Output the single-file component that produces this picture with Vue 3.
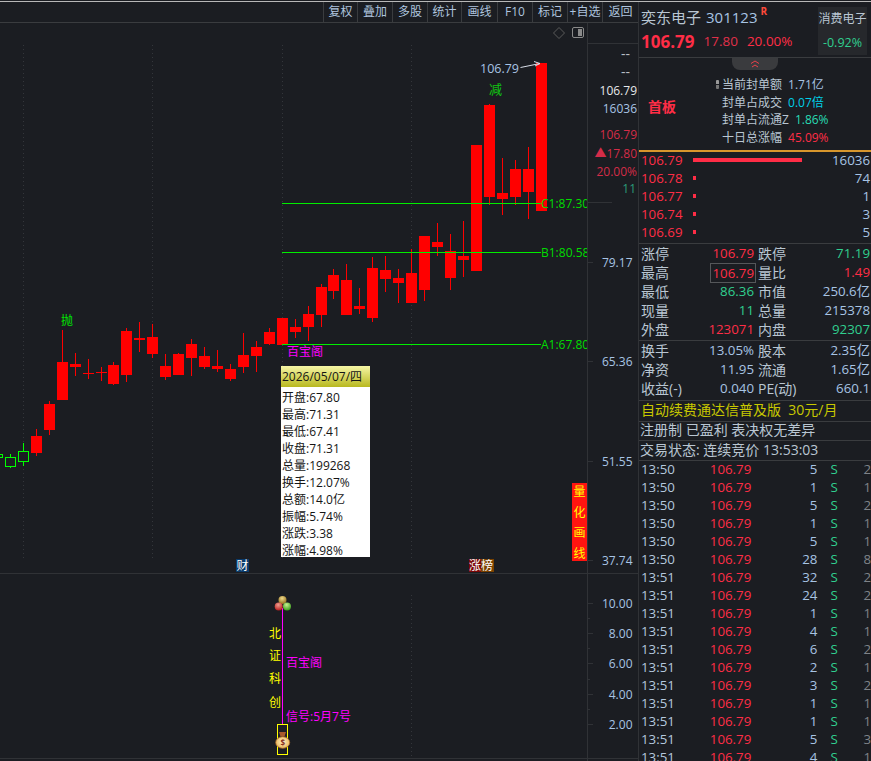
<script setup>
const tools = ['复权', '叠加', '多股', '统计', '画线', 'F10', '标记', '+自选', '返回']
const toolWidths = [34, 35, 35, 34, 36, 35, 35, 35, 36]

const red = [
  [36.5, 436, 453, 429, 456], [49.5, 404, 430, 401, 435], [62.5, 362, 400, 330, 400],
  [75.5, 364, 367, 353, 376], [88.5, 373, 374, 359, 379], [101.5, 372, 373, 367, 381],
  [113.5, 365, 384, 362, 385], [126.5, 331, 375, 328, 382], [139.5, 338, 340, 322, 352],
  [152.5, 337, 354, 324, 358], [165.5, 366, 377, 354, 380], [178.5, 354, 375, 353, 375],
  [191.5, 344, 358, 339, 376], [204.5, 356, 367, 347, 369], [217.5, 366, 369, 350, 372],
  [230.5, 369, 379, 364, 381], [243.5, 355, 367, 333, 373], [256.5, 347, 356, 341, 372],
  [269.5, 332, 344, 328, 345], [282.5, 318, 345, 318, 345], [295.5, 327, 332, 319, 338],
  [308.5, 314, 327, 306, 341], [321.5, 287, 315, 284, 327], [333.5, 275, 291, 269, 299],
  [346.5, 280, 315, 264, 315], [359.5, 306, 309, 288, 314], [372.5, 268, 318, 257, 322],
  [385.5, 270, 279, 256, 292], [398.5, 278, 283, 269, 303], [411.5, 273, 303, 249, 303],
  [424.5, 236, 290, 236, 301], [437.5, 242, 247, 223, 256], [450.5, 251, 278, 234, 290],
  [463.5, 256, 260, 221, 277], [476.5, 145, 271, 145, 271], [489.5, 105, 197, 104, 205],
  [502.5, 193, 199, 158, 215], [515.5, 169, 197, 160, 205], [528.5, 169, 192, 147, 219],
  [541.5, 63, 211, 63, 211]
]
const green = [
  [-2.5, 454, 457, 454, 457], [10.5, 457, 466, 454, 468], [23.5, 451, 461, 443, 466]
]
const dotted = [23.5, 152.5, 282.5, 411.5]
const levels = [
  { y: 203, t: 'C1:87.30' }, { y: 252, t: 'B1:80.58' }, { y: 344, t: 'A1:67.80' }
]
const axisMain = [
  { y: 262, t: '79.17' }, { y: 361, t: '65.36' }, { y: 461, t: '51.55' }, { y: 560, t: '37.74' }
]
const axisSub = [
  { y: 603, t: '10.00' }, { y: 633, t: '8.00' }, { y: 663, t: '6.00' }, { y: 694, t: '4.00' }, { y: 724, t: '2.00' }
]
const minorSub = [618, 648, 679, 709]
const vertical = [{ y: 633, t: '北' }, { y: 655, t: '证' }, { y: 678, t: '科' }, { y: 702, t: '创' }]
const quant = [{ y: 491, t: '量' }, { y: 512, t: '化' }, { y: 532, t: '画' }, { y: 553, t: '线' }]

const tip = ['开盘:67.80', '最高:71.31', '最低:67.41', '收盘:71.31', '总量:199268', '换手:12.07%', '总额:14.0亿', '振幅:5.74%', '涨跌:3.38', '涨幅:4.98%']

const info = [
  { l: '当前封单额', v: '1.71亿', c: 'v-blue', pin: true },
  { l: '封单占成交', v: '0.07倍', c: 'v-cyan' },
  { l: '封单占流通Z', v: '1.86%', c: 'v-teal' },
  { l: '十日总涨幅', v: '45.09%', c: 'v-red' }
]
const orders = [
  { p: '106.79', w: 109, q: '16036' }, { p: '106.78', w: 3, q: '74' }, { p: '106.77', w: 3, q: '1' },
  { p: '106.74', w: 3, q: '3' }, { p: '106.69', w: 3, q: '5' }
]
const stats1 = [
  ['涨停', '106.79', 'v-red', '跌停', '71.19', 'v-green'],
  ['最高', '106.79', 'v-red boxed', '量比', '1.49', 'v-red'],
  ['最低', '86.36', 'v-green', '市值', '250.6亿', 'v-blue'],
  ['现量', '11', 'v-green', '总量', '215378', 'v-blue'],
  ['外盘', '123071', 'v-red', '内盘', '92307', 'v-green']
]
const stats2 = [
  ['换手', '13.05%', 'v-blue', '股本', '2.35亿', 'v-blue'],
  ['净资', '11.95', 'v-blue', '流通', '1.65亿', 'v-blue'],
  ['收益(-)', '0.040', 'v-blue', 'PE(动)', '660.1', 'v-blue']
]
const trades = [
  ['13:50', 5, 2], ['13:50', 1, 1], ['13:50', 5, 2], ['13:50', 1, 1], ['13:50', 5, 1], ['13:50', 28, 8],
  ['13:51', 32, 2], ['13:51', 24, 2], ['13:51', 1, 1], ['13:51', 4, 1], ['13:51', 6, 2], ['13:51', 2, 1],
  ['13:51', 3, 2], ['13:51', 1, 1], ['13:51', 1, 1], ['13:51', 5, 3], ['13:51', 4, 1]
]
</script>

<template>
  <div class="app">
    <div class="topline"></div>
    <div class="main">
      <section class="left">
        <div class="toolbar">
          <span v-for="(t, i) in tools" :key="t" class="tool" :style="{ width: toolWidths[i] + 'px' }">{{ t }}</span>
        </div>
        <div class="pane">
          <svg class="chart" width="638" height="738" viewBox="0 23 638 738">
            <defs>
              <clipPath id="plotclip"><rect x="0" y="23" width="587" height="738" /></clipPath>
              <radialGradient id="ballGold" cx="45%" cy="30%" r="70%"><stop offset="0" stop-color="#efd98a" /><stop offset="1" stop-color="#94701c" /></radialGradient>
              <radialGradient id="ballRed" cx="45%" cy="30%" r="70%"><stop offset="0" stop-color="#f0a090" /><stop offset="1" stop-color="#b81c1c" /></radialGradient>
              <radialGradient id="ballGreen" cx="45%" cy="30%" r="70%"><stop offset="0" stop-color="#c8f090" /><stop offset="1" stop-color="#389a1c" /></radialGradient>
              <radialGradient id="bagFill" cx="50%" cy="45%" r="60%"><stop offset="0" stop-color="#fff4c8" /><stop offset="1" stop-color="#e8b050" /></radialGradient>
            </defs>

            <line v-for="x in dotted" :key="x" :x1="x" :x2="x" y1="45" y2="558" class="dot" />
            <line x1="411.5" x2="411.5" y1="595" y2="756" class="dot" />

            <line x1="0" x2="638" y1="573.5" y2="573.5" class="rule" />
            <line x1="0" x2="638" y1="758.5" y2="758.5" class="rule" />
            <line x1="587.5" x2="587.5" y1="23" y2="761" class="rule" />
            <line x1="587" x2="638" y1="43.5" y2="43.5" class="rule" />
            <line x1="587" x2="612" y1="202.5" y2="202.5" class="rule" />
            <line v-for="a in axisMain" :key="a.t" x1="587" x2="593" :y1="a.y + 0.5" :y2="a.y + 0.5" class="rule" />
            <line v-for="a in axisSub" :key="a.t" x1="587" x2="593" :y1="a.y + 0.5" :y2="a.y + 0.5" class="rule" />
            <line v-for="m in minorSub" :key="m" x1="587" x2="590" :y1="m + 0.5" :y2="m + 0.5" class="rule" />

            <path d="M559 27.5 L564.5 33 L559 38.5 L553.5 33 Z" class="diamond" />
            <rect x="572.5" y="27.5" width="11" height="10" rx="1.5" class="panel-ic" />
            <rect x="578" y="29" width="4" height="7" fill="#8a8a8a" />

            <g v-for="c in green" :key="c[0]">
              <rect :x="c[0] - 0.5" :y="c[3]" width="1" :height="c[4] - c[3]" fill="#00ff00" />
              <rect :x="c[0] - 5" :y="c[1] + 0.5" width="10" :height="c[2] - c[1]" class="hollow" />
            </g>
            <g v-for="c in red" :key="c[0]">
              <rect :x="c[0] - 0.5" :y="c[3]" width="1" :height="c[4] - c[3]" fill="#ff0000" />
              <rect :x="c[0] - 5.5" :y="c[1]" width="11" :height="c[2] - c[1]" fill="#ff0000" />
            </g>

            <g v-for="l in levels" :key="l.t">
              <line x1="282" x2="541" :y1="l.y + 0.5" :y2="l.y + 0.5" class="level" />
              <text x="541" :y="l.y + 0.5" class="lv" clip-path="url(#plotclip)">{{ l.t }}</text>
            </g>

            <text x="480" y="68" class="tx blue">106.79</text>
            <path d="M520.5 67.5 L540 63.5 M534 61.5 L540 63.5 L535 66" class="arrow" />
            <text x="489" y="89" class="tx mark">减</text>
            <text x="61" y="320" class="tx mark2">抛</text>
            <text x="287" y="351" class="tx magenta">百宝阁</text>

            <rect x="236" y="559" width="13" height="13" fill="#0a3a6a" />
            <text x="236.5" y="565.5" class="tx white">财</text>
            <rect x="469" y="559" width="12" height="13" fill="#7a0808" />
            <rect x="481" y="559" width="13" height="13" fill="#7a4200" />
            <text x="469" y="565.5" class="tx white">涨榜</text>

            <rect x="572" y="483" width="15" height="78" fill="#ff1410" />
            <text v-for="q in quant" :key="q.t" x="573.5" :y="q.y" class="tx yellow">{{ q.t }}</text>

            <text x="630" y="53" class="ax grey dash">--</text>
            <text x="630" y="71" class="ax grey dash">--</text>
            <text x="637" y="90" class="ax bright">106.79</text>
            <text x="637" y="108" class="ax blue">16036</text>
            <text x="637" y="134" class="ax dimred">106.79</text>
            <text x="637" y="153" class="ax dimred">▲17.80</text>
            <text x="637" y="171" class="ax dimred">20.00%</text>
            <text x="636" y="188" class="ax dimgreen">11</text>
            <text v-for="a in axisMain" :key="a.t" x="632.5" :y="a.y" class="ax blue">{{ a.t }}</text>
            <text v-for="a in axisSub" :key="a.t" x="632.5" :y="a.y" class="ax blue">{{ a.t }}</text>

            <line x1="282.5" x2="282.5" y1="608" y2="724" class="stem" />
            <circle cx="282.5" cy="600" r="4" fill="url(#ballGold)" />
            <circle cx="278.7" cy="606.5" r="4" fill="url(#ballRed)" />
            <circle cx="287" cy="606.5" r="4" fill="url(#ballGreen)" />
            <text v-for="v in vertical" :key="v.t" x="269" :y="v.y" class="tx yellow">{{ v.t }}</text>
            <text x="286" y="662" class="tx magenta">百宝阁</text>
            <text x="286" y="716" class="tx magenta">信号:5月7号</text>
            <rect x="277.5" y="724.5" width="10" height="30" class="ybox" />
            <path d="M279 732 L286 732 L284.5 736.5 L280.5 736.5 Z" fill="#a85a2c" />
            <ellipse cx="282.7" cy="742.5" rx="7" ry="5.8" fill="url(#bagFill)" stroke="#b06a28" stroke-width="0.8" />
            <text x="282.7" y="742.8" class="dollar">$</text>
          </svg>

          <div class="tooltip">
            <div class="tip-head">2026/05/07/四</div>
            <div class="tip-body">
              <div v-for="t in tip" :key="t" class="tip-row">{{ t }}</div>
            </div>
          </div>
        </div>
      </section>

      <aside class="right">
        <header class="head">
          <div class="head-main">
            <div class="name"><span class="cn">奕东电子</span><span class="code">301123</span><sup class="flag">R</sup></div>
            <div class="quote">
              <b class="last">106.79</b><span class="chg">17.80</span><span class="pct">20.00%</span>
            </div>
          </div>
          <div class="sector">
            <span class="sector-name">消费电子</span>
            <span class="sector-val">-0.92%</span>
          </div>
        </header>

        <div class="info">
          <div class="handle">
            <svg width="12" height="8" viewBox="0 0 12 8"><path d="M2 3.5 L6 1 L10 3.5 M3 7 L6 5 L9 7" fill="none" stroke="#e8404a" stroke-width="1" /></svg>
          </div>
          <div class="board">首板</div>
          <div class="info-rows">
            <div v-for="r in info" :key="r.l" class="info-row">
              <i v-if="r.pin" class="pin"></i>
              <span class="info-label">{{ r.l }}</span><span :class="r.c">{{ r.v }}</span>
            </div>
          </div>
        </div>

        <div class="orders">
          <div v-for="o in orders" :key="o.p" class="order">
            <span class="v-red order-price">{{ o.p }}</span>
            <span class="order-track"><i class="order-bar" :style="{ width: o.w + 'px' }"></i></span>
            <span class="v-blue">{{ o.q }}</span>
          </div>
        </div>

        <div class="stats s1">
          <div v-for="r in stats1" :key="r[0]" class="stat">
            <span class="cell c1"><em>{{ r[0] }}</em><span :class="r[2]">{{ r[1] }}</span></span>
            <span class="cell c2"><em>{{ r[3] }}</em><span :class="r[5]">{{ r[4] }}</span></span>
          </div>
        </div>
        <div class="stats s2">
          <div v-for="r in stats2" :key="r[0]" class="stat">
            <span class="cell c1"><em>{{ r[0] }}</em><span :class="r[2]">{{ r[1] }}</span></span>
            <span class="cell c2"><em>{{ r[3] }}</em><span :class="r[5]">{{ r[4] }}</span></span>
          </div>
        </div>

        <div class="line promo">自动续费通达信普及版&nbsp; 30元/月</div>
        <div class="line note">注册制 已盈利 表决权无差异</div>
        <div class="line state">交易状态: 连续竞价 13:53:03</div>

        <div class="trades">
          <div v-for="(t, i) in trades" :key="i" class="trade">
            <span class="t-time">{{ t[0] }}</span>
            <span class="t-price v-red">106.79</span>
            <span class="t-vol">{{ t[1] }}</span>
            <span class="t-side">S</span>
            <span class="t-n">{{ t[2] }}</span>
          </div>
        </div>
      </aside>
    </div>
  </div>
</template>

<style>
html, body { margin: 0; background: #1b1d22; }
</style>

<style scoped>
.app {
  width: 871px;
  height: 761px;
  overflow: hidden;
  background: #1b1d22;
  display: flex;
  flex-direction: column;
  font-family: "Open Sans", "Noto Sans CJK SC", sans-serif;
  color: #b4c8de;
}
.topline { height: 1px; margin-top: 1px; background: #b8b8b8; flex: none; margin-bottom: 0; }
.main { flex: 1; display: flex; min-height: 0; }
.left { width: 638px; flex: none; display: flex; flex-direction: column; }
.toolbar {
  height: 20px;
  flex: none;
  border-bottom: 1px solid #3a3c3f;
  display: flex;
  justify-content: flex-end;
}
.tool {
  box-sizing: border-box;
  border-left: 1px solid #3a3c3f;
  font-size: 12px;
  line-height: 20px;
  text-align: center;
  white-space: nowrap;
  color: #aec4de;
}
.pane { position: relative; flex: 1; }
.chart { display: block; }
.dot { stroke: #34363b; stroke-width: 1; stroke-dasharray: 1 3; }
.rule { stroke: #303236; stroke-width: 1; }
.diamond { fill: none; stroke: #5a5a5a; }
.panel-ic { fill: none; stroke: #8a8a8a; }
.hollow { fill: #1b1d22; stroke: #00ff00; stroke-width: 1; }
.level { stroke: #00ee00; stroke-width: 1; }
.lv { font-size: 12px; fill: #00dc00; dominant-baseline: central; }
.tx { font-size: 12px; dominant-baseline: central; }
.blue { fill: #a8c4e4; }
.tx.blue { font-size: 12.5px; }
.arrow { fill: none; stroke: #d8dde8; stroke-width: 1; }
.mark { fill: #10c810; font-size: 13px; }
.mark2 { fill: #00e800; }
.magenta { fill: #ff00ff; }
.white { fill: #ffffff; }
.yellow { fill: #ffff00; }
.ax { font-size: 12px; text-anchor: end; dominant-baseline: central; }
.dash { font-size: 14px; }
.grey { fill: #b8bec6; }
.bright { fill: #e6e8ea; }
.dimred { fill: #d42c48; }
.dimgreen { fill: #2a9a78; }
.stem { stroke: #ff00ff; stroke-width: 1; }
.ybox { fill: none; stroke: #ffff00; stroke-width: 1; }
.dollar { font-size: 8px; font-weight: 700; fill: #8a3020; text-anchor: middle; dominant-baseline: central; }

.tooltip {
  position: absolute;
  left: 281px;
  top: 343px;
  width: 89px;
  height: 191px;
  background: #fff;
  color: #151515;
  font-size: 12px;
}
.tip-head {
  height: 21px;
  line-height: 21px;
  padding-left: 1px;
  background: linear-gradient(#f6f6a6, #b8b81e);
  white-space: nowrap;
}
.tip-body { padding-top: 2px; }
.tip-row { height: 17px; line-height: 17px; padding-left: 1px; white-space: nowrap; }
.tip-row:last-child { height: 15px; }

.right {
  width: 233px;
  box-sizing: border-box;
  flex: none;
  border-left: 1px solid #303236;
  overflow: hidden;
  font-size: 13.3px;
}
.head {
  height: 55px;
  box-sizing: content-box;
  border-bottom: 1px solid #3a3c3f;
  display: flex;
  position: relative;
}
.head-main { width: 179px; box-sizing: border-box; padding-left: 2px; flex: none; }
.name { height: 30px; line-height: 30px; white-space: nowrap; display: flex; }
.cn { font-size: 15px; color: #b9c6d2; }
.code { font-size: 15px; margin-left: 5px; color: #a8c4e4; }
.flag { font-size: 10px; font-weight: 700; color: #ff4a3a; line-height: 14px; margin: 2px 0 0 3px; }
.quote { display: flex; align-items: center; height: 20px; margin-top: -1px; white-space: nowrap; }
.last { font-size: 17px; color: #ff2d46; }
.chg { font-size: 13.5px; color: #e0304a; margin-left: 9px; }
.pct { font-size: 13.5px; color: #ff2d46; margin-left: 9px; }
.sector {
  width: 49px;
  height: 48px;
  margin-top: 5px;
  background: #26282c;
  display: flex;
  flex-direction: column;
  align-items: center;
  white-space: nowrap;
}
.sector-name { font-size: 12px; line-height: 24px; color: #b9c6d2; }
.sector-val { font-size: 12.5px; line-height: 24px; color: #30cf8f; }

.info {
  position: relative;
  height: 92px;
  border-bottom: 2px solid #d8962c;
  box-sizing: content-box;
  display: flex;
}
.handle {
  position: absolute;
  left: 93px;
  top: 0;
  width: 46px;
  height: 12px;
  background: #3a3b3e;
  border-radius: 0 0 8px 8px;
  display: flex;
  justify-content: center;
  align-items: center;
}
.board {
  width: 83px;
  padding-left: 9px;
  box-sizing: border-box;
  margin-top: 40px;
  font-size: 14px;
  font-weight: 700;
  line-height: 18px;
  color: #ff2d46;
}
.info-rows { padding-top: 18px; }
.info-row { height: 17.7px; line-height: 18px; font-size: 12px; display: flex; white-space: nowrap; position: relative; }
.info-label { color: #b9c6d2; margin-right: 6px; }
.pin {
  position: absolute;
  left: -6px;
  top: 4px;
  width: 3px;
  height: 9px;
  background: linear-gradient(#999 0 4px, transparent 4px 5px, #777 5px);
  border-radius: 1px;
}
.v-red { color: #ff2d46; }
.v-green { color: #30cf8f; }
.v-blue { color: #a8c4e4; }
.v-cyan { color: #00cfe8; }
.v-teal { color: #28dcb4; }

.orders { height: 92px; margin-top: -1px; border-bottom: 1px solid #3a3c3f; }
.order { height: 18px; line-height: 18px; display: flex; align-items: center; padding: 0 1px 0 2px; white-space: nowrap; }
.order-price { width: 52px; }
.order-track { flex: 1; height: 4px; }
.order-bar { display: block; height: 4px; background: #ff2d46; }

.stats { border-bottom: 1px solid #3a3c3f; }
.s1 { height: 96px; }
.s2 { height: 59px; }
.stat { height: 19px; line-height: 19px; display: flex; padding-left: 2px; white-space: nowrap; }
.cell { display: flex; justify-content: space-between; align-items: center; }
.cell em { font-style: normal; font-size: 14px; color: #b9c6d2; }
.c1 { width: 113px; margin-right: 4px; }
.c2 { width: 112px; }
.boxed { outline: 1px solid #55575a; outline-offset: 0; padding: 0 1px; margin-right: -1px; line-height: 18px; }

.line {
  height: 20px;
  line-height: 18px;
  font-size: 14px;
  padding-left: 1px;
  white-space: nowrap;
  border-bottom: 1px solid #3a3c3f;
}
.promo { color: #c8c800; padding-left: 2px; }
.note { height: 18px; line-height: 16px; color: #b9c6d2; }
.state { height: 19px; line-height: 17px; color: #b9c6d2; }

.trades { margin-top: -1px; }
.trade { height: 18px; line-height: 18px; display: flex; padding-left: 2px; white-space: nowrap; }
.t-time { width: 69px; }
.t-price { width: 42px; }
.t-vol { width: 66px; text-align: right; color: #a8c4e4; }
.t-side { width: 13px; margin-left: 13px; color: #30cf8f; }
.t-n { margin-left: 20px; color: #7f8388; }
</style>
